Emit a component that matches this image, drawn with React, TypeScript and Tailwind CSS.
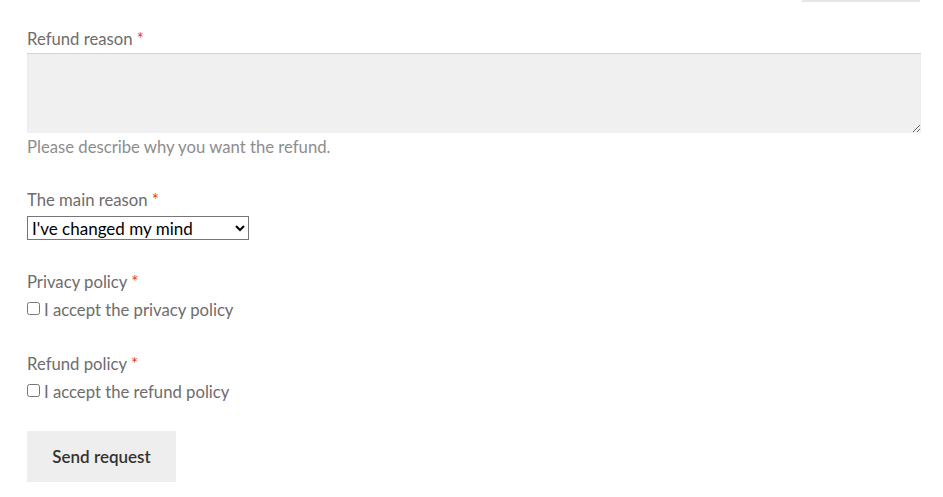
export default function App() {
  return (
    <div className="min-h-[497px] bg-white text-[16.7px] leading-[26px] text-[#6d6d6d]" style={{ fontFamily: "Lato, 'Liberation Sans', sans-serif" }}>
      <div className="flex justify-end pr-[23px]">
        <div className="h-[2px] w-[118px] bg-[#e6e6e6]" />
      </div>
      <form className="pl-[27px] pr-[22px] pt-[24px]">
        <label className="block">
          Refund reason <span className="text-[#e2401c]">*</span>
        </label>
        <textarea className="mt-px block h-[80px] w-full resize-y bg-[#f0f0f0] px-2 py-1 shadow-[inset_0_1px_1px_rgba(0,0,0,0.125)] outline-none" />
        <p className="mt-px text-[#8d8d8d]">Please describe why you want the refund.</p>

        <label className="mt-[27px] block">
          The main reason <span className="text-[#e2401c]">*</span>
        </label>
        <select
          className="mt-[3px] block h-[24px] w-[222px] border border-[#767676] bg-white pl-0 text-[17px] leading-[22px] text-black"
          defaultValue="mind"
          style={{ appearance: "auto" }}
        >
          <option value="mind">I've changed my mind</option>
          <option value="damaged">The item is damaged</option>
          <option value="other">Other</option>
        </select>

        <label className="mt-[29px] block">
          Privacy policy <span className="text-[#e2401c]">*</span>
        </label>
        <label className="mt-[2px] flex items-start">
          <input type="checkbox" className="m-0 mr-[4px] mt-[5px] h-[13px] w-[13px]" style={{ appearance: "auto" }} />
          I accept the privacy policy
        </label>

        <label className="mt-[28px] block">
          Refund policy <span className="text-[#e2401c]">*</span>
        </label>
        <label className="mt-[2px] flex items-start">
          <input type="checkbox" className="m-0 mr-[4px] mt-[5px] h-[13px] w-[13px]" style={{ appearance: "auto" }} />
          I accept the refund policy
        </label>

        <button type="button" className="mt-[26px] block h-[51px] w-[149px] bg-[#eeeeee] text-[17px] font-semibold text-[#333333]">
          Send request
        </button>
      </form>
    </div>
  )
}
